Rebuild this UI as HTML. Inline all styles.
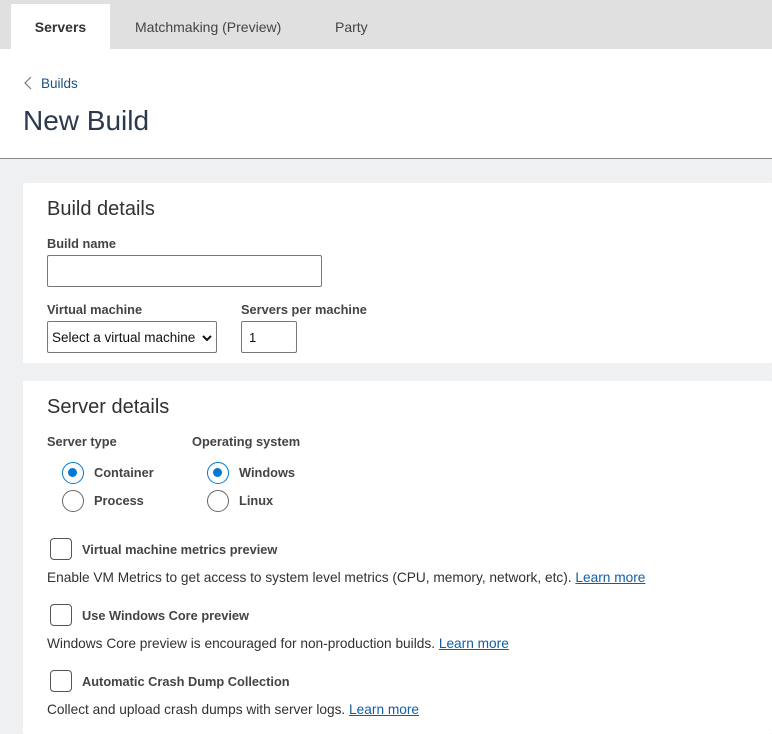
<!DOCTYPE html>
<html><head><style>
*{box-sizing:border-box;margin:0;padding:0}
body{width:772px;height:734px;overflow:hidden;background:#eff0f2;font-family:"Liberation Sans",sans-serif;color:#323130;position:relative}
.abs{position:absolute;white-space:nowrap}
.tabs{position:absolute;left:0;top:0;width:772px;height:49px;background:#e0e0e0}
.tab{position:absolute;top:0;height:49px;line-height:54px;font-size:14px;color:#444}
.hdr{position:absolute;left:0;top:49px;width:772px;height:110px;background:#fff;border-bottom:1px solid #8a8a8a}
.card{position:absolute;left:23px;width:749px;background:#fff;border-radius:2px}
.lbl{font-size:12.8px;font-weight:bold;color:#444}
.inp{position:absolute;border:1px solid #777;border-radius:2px;background:#fff}
.radio{position:absolute;width:22px;height:22px;border:1px solid #666;border-radius:50%}
.radio.on{border:1.5px solid #0078d4}
.radio.on::after{content:"";position:absolute;left:5px;top:5px;width:9px;height:9px;border-radius:50%;background:#0078d4}
.cb{position:absolute;width:22px;height:22px;border:1px solid #555;border-radius:4px}
.txt{font-size:13.7px;color:#323130}
a{color:#0f5fa8;text-decoration:underline}
</style></head><body>
<div class="tabs">
<div class="tab" style="left:11px;top:4px;height:45px;line-height:46px;width:99px;background:#fff;text-align:center;font-weight:bold;color:#333">Servers</div>
<div class="tab" style="left:135px">Matchmaking (Preview)</div>
<div class="tab" style="left:335px">Party</div>
</div>
<div class="hdr">
<svg class="abs" style="left:24px;top:27px" width="8" height="14"><path d="M7 1L1 7l6 6" stroke="#777" fill="none" stroke-width="1.2"/></svg>
<div class="abs" style="left:41px;top:27px;font-size:13.5px;color:#1e4f7e">Builds</div>
<div class="abs" style="left:23px;top:56px;font-size:28px;font-weight:normal;color:#2a3a4c">New Build</div>
</div>
<div class="card" style="top:183px;height:180px">
<div class="abs" style="left:24px;top:15px;font-size:20px;color:#323130">Build details</div>
<div class="abs lbl" style="left:24px;top:53px">Build name</div>
<div class="inp" style="left:24px;top:72px;width:275px;height:32px"></div>
<div class="abs lbl" style="left:24px;top:119px">Virtual machine</div>
<div class="inp" style="left:24px;top:138px;width:170px;height:32px"><span class="abs" style="left:4px;top:8px;font-size:13.5px;color:#111">Select a virtual machine</span><svg class="abs" style="left:154px;top:12px" width="10" height="8"><path d="M1 2l4 4 4-4" stroke="#111" stroke-width="2" fill="none"/></svg></div>
<div class="abs lbl" style="left:218px;top:119px">Servers per machine</div>
<div class="inp" style="left:218px;top:138px;width:56px;height:32px"><span class="abs" style="left:7px;top:8px;font-size:13px;color:#111">1</span></div>
</div>
<div class="card" style="top:381px;height:353px">
<div class="abs" style="left:24px;top:15px;font-size:20px">Server details</div>
<div class="abs lbl" style="left:24px;top:53px">Server type</div>
<div class="abs lbl" style="left:169px;top:53px">Operating system</div>
<div class="radio on" style="left:39px;top:81px"></div><div class="abs lbl" style="left:71px;top:84px">Container</div>
<div class="radio" style="left:39px;top:109px"></div><div class="abs lbl" style="left:71px;top:112px">Process</div>
<div class="radio on" style="left:184px;top:81px"></div><div class="abs lbl" style="left:216px;top:84px">Windows</div>
<div class="radio" style="left:184px;top:109px"></div><div class="abs lbl" style="left:216px;top:112px">Linux</div>
<div class="cb" style="left:27px;top:157px"></div><div class="abs lbl" style="left:59px;top:161px">Virtual machine metrics preview</div>
<div class="abs txt" style="left:24px;top:189px">Enable VM Metrics to get access to system level metrics (CPU, memory, network, etc). <a>Learn more</a></div>
<div class="cb" style="left:27px;top:223px"></div><div class="abs lbl" style="left:59px;top:227px">Use Windows Core preview</div>
<div class="abs txt" style="left:24px;top:255px">Windows Core preview is encouraged for non-production builds. <a>Learn more</a></div>
<div class="cb" style="left:27px;top:289px"></div><div class="abs lbl" style="left:59px;top:293px">Automatic Crash Dump Collection</div>
<div class="abs txt" style="left:24px;top:321px">Collect and upload crash dumps with server logs. <a>Learn more</a></div>
</div>
</body></html>
